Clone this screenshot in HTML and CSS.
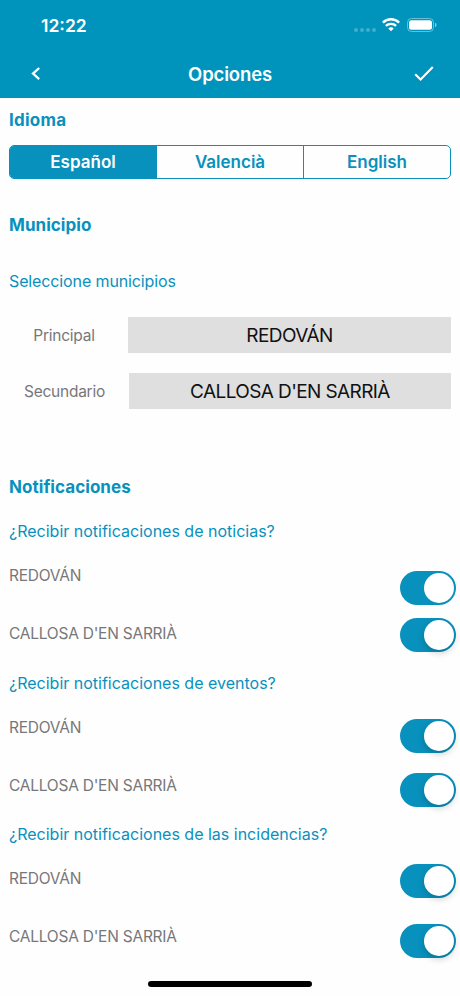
FILE: index.html
```html
<!DOCTYPE html>
<html lang="es">
<head>
    <meta charset="UTF-8">
    <meta name="viewport" content="width=device-width, initial-scale=1.0">
    <title>Opciones</title>
    <link rel="stylesheet" href="styles.css">
</head>
<body>
    <header class="header">
        <div class="status-bar">
            <span class="time">12:22</span>
            <div class="status-icons">
                <div class="signal"><i></i><i></i><i></i><i></i></div>
                <svg class="wifi" width="18" height="14" viewBox="0 0 18 14">
                    <path d="M.9 4.6a11.6 11.6 0 0 1 16.2 0" fill="none" stroke="#fff" stroke-width="2.4"/>
                    <path d="M3.9 7.9a7.3 7.3 0 0 1 10.2 0" fill="none" stroke="#fff" stroke-width="2.3"/>
                    <path d="M9 13.2 6.3 10.5a3.9 3.9 0 0 1 5.4 0z" fill="#fff"/>
                </svg>
                <svg class="battery" width="30" height="14" viewBox="0 0 30 14">
                    <rect x=".5" y=".5" width="26" height="13" rx="4" fill="none" stroke="#fff" stroke-opacity=".4"/>
                    <rect x="2" y="2.3" width="23" height="9.5" rx="2.5" fill="#fff"/>
                    <path d="M28 4.8c2 .6 2 3.8 0 4.4z" fill="#fff" fill-opacity=".5"/>
                </svg>
            </div>
        </div>
        <div class="nav-bar">
            <button class="nav-btn back" aria-label="Volver">
                <svg width="10" height="14" viewBox="0 0 10 14"><path d="M8.2 1 2 6.6l6.2 5.6" fill="none" stroke="#fff" stroke-width="2.3"/></svg>
            </button>
            <h1>Opciones</h1>
            <button class="nav-btn" aria-label="Guardar">
                <svg width="20" height="16" viewBox="0 0 20 16"><path d="M1.2 8.2 6.6 13.6 18.8 1" fill="none" stroke="#fff" stroke-width="2.1"/></svg>
            </button>
        </div>
    </header>

    <main class="content">
        <h2 class="idioma">Idioma</h2>
        <div class="segmented">
            <button class="segment active">Español</button>
            <button class="segment">Valencià</button>
            <button class="segment">English</button>
        </div>

        <h2 class="municipio">Municipio</h2>
        <h3 class="select-title">Seleccione municipios</h3>
        <div class="field">
            <label>Principal</label>
            <div class="select">REDOVÁN</div>
        </div>
        <div class="field field-second">
            <label>Secundario</label>
            <div class="select">CALLOSA D'EN SARRIÀ</div>
        </div>

        <h2 class="notificaciones">Notificaciones</h2>
        <section class="group noticias">
            <h3>¿Recibir notificaciones de noticias?</h3>
            <div class="group-body">
                <div class="names">
                    <span>REDOVÁN</span>
                    <span>CALLOSA D'EN SARRIÀ</span>
                </div>
                <div class="switches">
                    <div class="switch flat"></div>
                    <div class="switch"></div>
                </div>
            </div>
        </section>
        <section class="group eventos">
            <h3>¿Recibir notificaciones de eventos?</h3>
            <div class="group-body">
                <div class="names">
                    <span>REDOVÁN</span>
                    <span>CALLOSA D'EN SARRIÀ</span>
                </div>
                <div class="switches">
                    <div class="switch"></div>
                    <div class="switch"></div>
                </div>
            </div>
        </section>
        <section class="group incidencias">
            <h3>¿Recibir notificaciones de las incidencias?</h3>
            <div class="group-body">
                <div class="names">
                    <span>REDOVÁN</span>
                    <span>CALLOSA D'EN SARRIÀ</span>
                </div>
                <div class="switches">
                    <div class="switch"></div>
                    <div class="switch"></div>
                </div>
            </div>
        </section>
    </main>

    <div class="home-bar"></div>

    <script>
        document.querySelectorAll('.segment').forEach(function (segment) {
            segment.addEventListener('click', function () {
                document.querySelector('.segment.active').classList.remove('active');
                segment.classList.add('active');
            });
        });
    </script>
</body>
</html>
```
FILE: styles.css
```css
* {
    box-sizing: border-box;
}

body {
    margin: 0;
    height: 996px;
    font-family: Inter, "Liberation Sans", sans-serif;
    background-color: #fefefe;
    color: #77777a;
    display: flex;
    flex-direction: column;
    overflow: hidden;
}

button {
    border: none;
    background: none;
    padding: 0;
    font-family: inherit;
    cursor: pointer;
}

h1, h2, h3 {
    margin: 0;
}

.header {
    height: 98px;
    background-color: #0094bc;
    color: white;
    flex-shrink: 0;
}

.status-bar {
    height: 50px;
    padding: 1px 23px 0 41px;
    display: flex;
    justify-content: space-between;
    align-items: center;
}

.time {
    font-size: 17.5px;
    font-weight: 600;
}

.status-icons {
    display: flex;
    align-items: center;
    margin-top: -1px;
}

.signal {
    display: flex;
    gap: 2px;
    margin: 9px 6px 0 0;
}

.signal i {
    width: 4px;
    height: 4px;
    border-radius: 50%;
    background-color: rgba(255, 255, 255, 0.25);
}

.wifi {
    margin-right: 7px;
}

.nav-bar {
    height: 48px;
    padding: 0 26px;
    display: flex;
    justify-content: space-between;
    align-items: center;
}

.nav-btn {
    display: flex;
    width: 20px;
}

.back {
    padding-left: 5px;
}

.nav-bar h1 {
    font-size: 18.5px;
    font-weight: 600;
    line-height: 24px;
    letter-spacing: -0.15px;
}

.content {
    flex: 1;
    padding: 10px 9px 0;
}

h2 {
    font-size: 17px;
    font-weight: 700;
    line-height: 22px;
    letter-spacing: 0.05px;
    color: #0891bd;
}

h3 {
    font-size: 16px;
    font-weight: 400;
    line-height: 22px;
    color: #0891bd;
}

.idioma {
    padding-top: 1px;
    letter-spacing: 0.25px;
}

.segmented {
    display: flex;
    height: 34px;
    margin-top: 14px;
    border: 1px solid #0891bd;
    border-radius: 5px;
    overflow: hidden;
}

.segment {
    flex: 1;
    font-size: 17px;
    font-weight: 600;
    color: #0891bd;
}

.segment + .segment {
    border-left: 1px solid #0891bd;
}

.segment.active {
    background-color: #0891bd;
    color: white;
}

.municipio {
    margin-top: 35px;
}

.select-title {
    margin-top: 34px;
    letter-spacing: -0.12px;
}

.field {
    display: flex;
    height: 36px;
    margin-top: 25px;
}

.field-second {
    margin-top: 20px;
}

.field label {
    width: 119px;
    padding-right: 9px;
    display: flex;
    align-items: center;
    justify-content: center;
    font-size: 15.5px;
    letter-spacing: -0.25px;
}

.field-second label {
    width: 120px;
}

.select {
    flex: 1;
    display: flex;
    align-items: center;
    justify-content: center;
    background-color: #dfdfdf;
    color: #111;
    font-size: 19px;
    letter-spacing: -0.6px;
}

.notificaciones {
    margin-top: 67px;
}

.group {
    height: 152px;
}

.noticias {
    margin-top: 22px;
}

.eventos {
    height: 151px;
}

.group-body {
    display: flex;
    justify-content: space-between;
    margin-right: -5px;
}

.names {
    display: flex;
    flex-direction: column;
    gap: 36px;
    padding-top: 23px;
    font-size: 15.5px;
    line-height: 22px;
    letter-spacing: -0.24px;
}

.switches {
    display: flex;
    flex-direction: column;
    gap: 13.5px;
    padding-top: 28.5px;
}

.eventos .switches {
    gap: 19.5px;
    padding-top: 25px;
}

.incidencias .switches {
    gap: 26px;
    padding-top: 19px;
}

.switch {
    width: 56px;
    height: 34px;
    padding: 2px;
    border-radius: 17px;
    background-color: #0891bd;
    display: flex;
    justify-content: flex-end;
}

.switch::after {
    content: "";
    width: 30px;
    height: 30px;
    border-radius: 50%;
    background-color: white;
    box-shadow: 0 3px 7px rgba(0, 0, 0, 0.2);
}

.switch.flat::after {
    box-shadow: none;
}

.home-bar {
    width: 164px;
    height: 6px;
    margin: 0 auto 9px;
    border-radius: 3px;
    background-color: black;
}
```
